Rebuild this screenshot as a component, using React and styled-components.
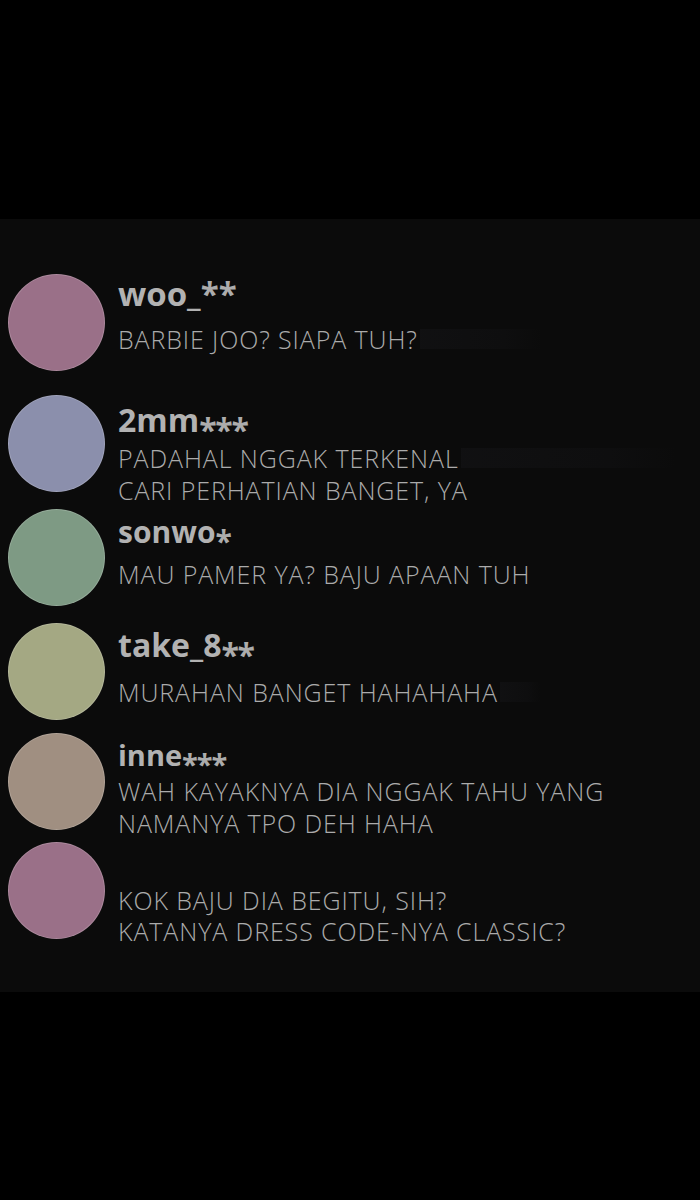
import styled, { createGlobalStyle } from "styled-components";

const GlobalStyle = createGlobalStyle`
  html, body {
    margin: 0;
    padding: 0;
    background: #000;
  }
  body {
    font-family: "Open Sans", "Noto Sans", sans-serif;
  }
`;

const comments = [
  {
    color: "#9a7088",
    top: 55,
    pad: 0,
    name: "woo_",
    mask: "**",
    size: 33,
    low: false,
    gap: 9,
    lines: ["BARBIE JOO? SIAPA TUH?"],
    smudge: 122,
  },
  {
    color: "#8b8fac",
    top: 24,
    pad: 5,
    name: "2mm",
    mask: "***",
    size: 32,
    low: true,
    gap: 2,
    lines: ["PADAHAL NGGAK TERKENAL", "CARI PERHATIAN BANGET, YA"],
    smudge: 215,
  },
  {
    color: "#7e9a84",
    top: 17,
    pad: 3,
    name: "sonwo",
    mask: "*",
    size: 30,
    low: true,
    gap: 6,
    lines: ["MAU PAMER YA? BAJU APAAN TUH"],
  },
  {
    color: "#a4a883",
    top: 17,
    pad: 2,
    name: "take_8",
    mask: "**",
    size: 32,
    low: true,
    gap: 11,
    lines: ["MURAHAN BANGET HAHAHAHA"],
    smudge: 40,
  },
  {
    color: "#a08f81",
    top: 13,
    pad: 2,
    name: "inne",
    mask: "***",
    size: 29,
    low: true,
    gap: 0,
    lines: ["WAH KAYAKNYA DIA NGGAK TAHU YANG", "NAMANYA TPO DEH HAHA"],
  },
  {
    color: "#9a7088",
    top: 12,
    pad: 43,
    lines: ["KOK BAJU DIA BEGITU, SIH?", "KATANYA DRESS CODE-NYA CLASSIC?"],
    lineHeight: 31,
  },
];

const App = () => {
  return (
    <Page>
      <GlobalStyle />
      <Panel>
        {comments.map((c, i) => (
          <Row key={i} $top={c.top}>
            <Avatar $color={c.color} />
            <Content $pad={c.pad}>
              {c.name && (
                <Name $size={c.size}>
                  {c.name}
                  <Mask $low={c.low}>{c.mask}</Mask>
                </Name>
              )}
              <Message $gap={c.gap || 0} $lh={c.lineHeight || 32}>
                {c.lines.map((line, j) => (
                  <Line key={j}>
                    {line}
                    {j === 0 && c.smudge && <Smudge $w={c.smudge} />}
                  </Line>
                ))}
              </Message>
            </Content>
          </Row>
        ))}
      </Panel>
    </Page>
  );
};

export default App;

const Page = styled.div`
  width: 700px;
  height: 1200px;
  padding-top: 219px;
  box-sizing: border-box;
  background: #000;
`;

const Panel = styled.div`
  display: flex;
  flex-direction: column;
  height: 773px;
  box-sizing: border-box;
  background: #0b0b0b;
  padding: 0 0 0 8px;
`;

const Row = styled.div`
  display: flex;
  align-items: flex-start;
  gap: 13px;
  height: 97px;
  flex: 0 0 auto;
  margin-top: ${(p) => p.$top}px;
`;

const Avatar = styled.div`
  flex: 0 0 auto;
  width: 97px;
  height: 97px;
  border-radius: 50%;
  box-sizing: border-box;
  background: ${(p) => p.$color};
  border: 1px solid rgba(255, 255, 255, 0.18);
`;

const Content = styled.div`
  display: flex;
  flex-direction: column;
  padding-top: ${(p) => p.$pad}px;
`;

const Name = styled.div`
  color: #b2b2b2;
  font-size: ${(p) => p.$size}px;
  font-weight: 700;
  line-height: 40px;
  white-space: nowrap;
`;

const Mask = styled.span`
  display: inline-block;
  color: #acacac;
  font-size: 1em;
  line-height: 0.5em;
  position: relative;
  top: ${(p) => (p.$low ? "0.3em" : "0")};
  letter-spacing: ${(p) => (p.$low ? "-0.04em" : "0")};
`;

const Message = styled.div`
  margin-top: ${(p) => p.$gap}px;
  color: #ababab;
  font-size: 25px;
  font-weight: 300;
  letter-spacing: 0.9px;
  line-height: ${(p) => p.$lh}px;
`;

const Line = styled.div`
  white-space: nowrap;
  display: flex;
  align-items: center;
`;

const Smudge = styled.span`
  display: inline-block;
  width: ${(p) => p.$w}px;
  height: 20px;
  margin-left: 2px;
  background: linear-gradient(
    to right,
    rgba(40, 40, 48, 0.18),
    rgba(40, 40, 48, 0.1) 70%,
    rgba(40, 40, 48, 0)
  );
`;
